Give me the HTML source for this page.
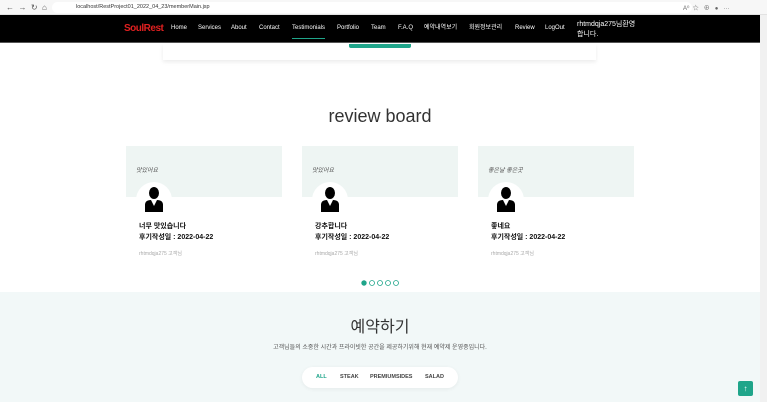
<!DOCTYPE html>
<html><head><meta charset="utf-8"><style>
*{margin:0;padding:0;box-sizing:border-box}
body{width:767px;height:402px;overflow:hidden;background:#fff;font-family:"Liberation Sans","Noto Sans CJK KR",sans-serif;position:relative}
.abs{position:absolute}
.bar{top:0;left:0;width:767px;height:15px;background:#f7f7f7;border-bottom:1px solid #e2e2e2}
.url{left:52px;top:2px;width:640px;height:11px;background:#fff;border-radius:6px;font-size:5.5px;color:#333;padding-left:24px;line-height:11px}
.nav{top:15px;left:0;width:760px;height:28px;background:#000;border-bottom:1px solid #555}
.nav span{position:absolute;top:10px;font-size:6px;line-height:7px;color:#fff}
.sb{top:15px;left:760px;width:7px;height:387px;background:#f1f1f1}
.card{top:146px;width:156px;height:120px}
.card .top{height:51px;background:#eef5f3;font-size:6px;color:#555;font-style:italic;padding:19px 0 0 10px}
.av{position:absolute;left:10px;top:36px;width:36px;height:36px;border-radius:50%;background:#fff}
.t{position:absolute;left:13px;font-size:7px;font-weight:bold;color:#111}
.u{position:absolute;left:13px;top:104px;font-size:5px;color:#aaa}
</style></head><body>
<div class="abs bar"></div>
<div class="abs" style="left:6px;top:3px;font-size:8px;color:#555">← &nbsp;→ &nbsp;↻ &nbsp;⌂</div>
<div class="abs url">localhost/RestProject01_2022_04_23/memberMain.jsp</div>
<div class="abs" style="left:683px;top:3px;font-size:6px;color:#666">A⁰ &nbsp;☆ &nbsp;&nbsp;⊕ &nbsp;&nbsp;● &nbsp;&nbsp;···</div>
<div class="abs nav">
<span style="left:124px;top:8px;font-size:10px;line-height:11px;font-weight:bold;color:#e02020;letter-spacing:-0.5px">SoulRest</span>
<span style="left:171px">Home</span><span style="left:198px">Services</span><span style="left:231px">About</span><span style="left:259px">Contact</span>
<span style="left:292px">Testimonials</span><span style="left:292px;top:23px;width:33px;height:1px;background:#1fa58a"></span>
<span style="left:337px">Portfolio</span><span style="left:371px">Team</span><span style="left:398px">F.A.Q</span>
<span style="left:424px">예약내역보기</span><span style="left:469px">회원정보관리</span><span style="left:515px">Review</span><span style="left:545px">LogOut</span>
<span style="left:577px;top:5px;font-size:7px;line-height:10px">rhtmdqja275님환영<br>합니다.</span>
</div>
<div class="abs sb"></div>
<div class="abs" style="left:163px;top:44px;width:433px;height:16px;background:#fff;box-shadow:0 2px 4px rgba(0,0,0,.08)"></div>
<div class="abs" style="left:349px;top:44px;width:62px;height:4px;background:#1fa58a;border-radius:0 0 2px 2px"></div>
<div class="abs" style="left:0;top:106px;width:760px;text-align:center;font-size:18px;color:#333">review board</div>

<div class="abs card" style="left:126px"><div class="top">맛있어요</div><div class="av"></div>
<svg class="abs" style="left:18px;top:40px" width="20" height="26" viewBox="0 0 20 26"><ellipse cx="10" cy="7" rx="5" ry="6"/><path d="M1 26 L1 19 Q1 14 7 14 L10 20 L13 14 Q19 14 19 19 L19 26Z"/></svg>
<div class="t" style="top:75px">너무 맛있습니다</div><div class="t" style="top:86px">후기작성일 : 2022-04-22</div><div class="u">rhtmdqja275 고객님</div></div>
<div class="abs card" style="left:302px"><div class="top">맛있어요</div><div class="av"></div>
<svg class="abs" style="left:18px;top:40px" width="20" height="26" viewBox="0 0 20 26"><ellipse cx="10" cy="7" rx="5" ry="6"/><path d="M1 26 L1 19 Q1 14 7 14 L10 20 L13 14 Q19 14 19 19 L19 26Z"/></svg>
<div class="t" style="top:75px">강추합니다</div><div class="t" style="top:86px">후기작성일 : 2022-04-22</div><div class="u">rhtmdqja275 고객님</div></div>
<div class="abs card" style="left:478px"><div class="top">좋은날 좋은곳</div><div class="av"></div>
<svg class="abs" style="left:18px;top:40px" width="20" height="26" viewBox="0 0 20 26"><ellipse cx="10" cy="7" rx="5" ry="6"/><path d="M1 26 L1 19 Q1 14 7 14 L10 20 L13 14 Q19 14 19 19 L19 26Z"/></svg>
<div class="t" style="top:75px">좋네요</div><div class="t" style="top:86px">후기작성일 : 2022-04-22</div><div class="u">rhtmdqja275 고객님</div></div>

<svg class="abs" style="left:360px;top:279px" width="42" height="8"><circle cx="4" cy="4" r="2.7" fill="#1fa58a"/><g fill="none" stroke="#1fa58a" stroke-width="0.8"><circle cx="12" cy="4" r="2.5"/><circle cx="20" cy="4" r="2.5"/><circle cx="28" cy="4" r="2.5"/><circle cx="36" cy="4" r="2.5"/></g></svg>

<div class="abs" style="left:0;top:292px;width:760px;height:110px;background:#f2f8f8"></div>
<div class="abs" style="left:0;top:313px;width:760px;text-align:center;font-size:16px;color:#333">예약하기</div>
<div class="abs" style="left:0;top:342px;width:760px;text-align:center;font-size:6px;color:#555">고객님들의 소중한 시간과 프라이빗한 공간을 제공하기위해 현재 예약제 운영중입니다.</div>
<div class="abs" style="left:302px;top:367px;width:156px;height:21px;background:#fff;border-radius:11px;box-shadow:0 1px 4px rgba(0,0,0,.06);font-size:5.5px;font-weight:bold;color:#444">
<span class="abs" style="left:14px;top:7px;color:#1fa58a">ALL</span><span class="abs" style="left:38px;top:7px">STEAK</span><span class="abs" style="left:68px;top:7px">PREMIUMSIDES</span><span class="abs" style="left:123px;top:7px">SALAD</span></div>
<div class="abs" style="left:738px;top:381px;width:15px;height:15px;background:#1fa58a;border-radius:2px;color:#fff;font-size:8px;text-align:center;line-height:15px">↑</div>
</body></html>
